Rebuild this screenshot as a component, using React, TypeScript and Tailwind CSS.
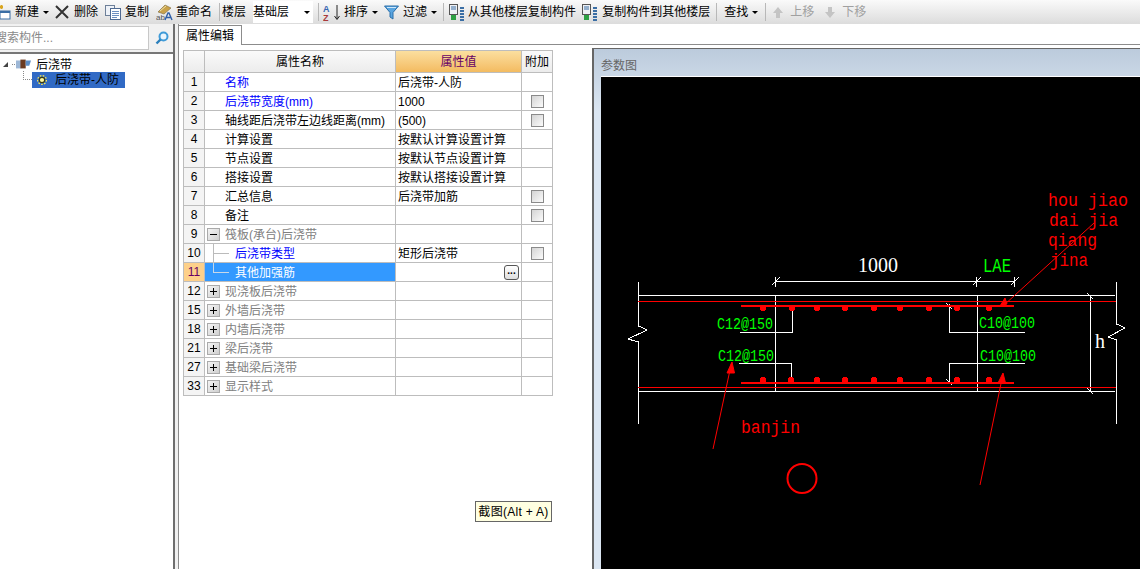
import React from 'react';

const FONT = 'font-["Liberation_Sans","Noto_Sans_CJK_SC",sans-serif]';

const Caret = () => <span className="ml-[4px] w-0 h-0 border-x-[3px] border-x-transparent border-t-[3px] border-t-black" />;
const Sep = ({ ml, mr }: { ml: string; mr: string }) => <span className={`w-px h-[18px] bg-[#b8b8b8] ${ml} ${mr}`} />;

const NewIcon = () => (
  <svg width="11" height="16" viewBox="0 0 11 16" className="shrink-0">
    <rect x="0" y="7" width="10" height="8" fill="#fff" stroke="#3a6ea5" />
    <rect x="0" y="7" width="10" height="2" fill="#3a6ea5" />
    <path d="M0 3h3M1.5 1v4" stroke="#d9a520" strokeWidth="2" />
  </svg>
);
const CopyIcon = () => (
  <svg width="16" height="15" viewBox="0 0 16 15" className="shrink-0">
    <rect x="0.5" y="0.5" width="9" height="10" fill="#eef2f8" stroke="#6d7f98" />
    <rect x="5.5" y="3.5" width="10" height="11" fill="#fff" stroke="#4f6a92" />
    <path d="M7 6.5h7M7 8.5h7M7 10.5h7M7 12.5h5" stroke="#6d8fc0" />
  </svg>
);
const RenameIcon = () => (
  <svg width="17" height="17" viewBox="0 0 17 17" className="shrink-0">
    <path d="M2 8 9 1l6 3-7 6z" fill="#c9a24a" stroke="#7d6a3c" strokeWidth="0.6" />
    <path d="M4 7l6-5" stroke="#efe2a8" />
    <text x="0" y="16" fontSize="8" fill="#555" fontFamily="Liberation Sans">ab</text>
    <path d="M9 16l3-7h1l3 7M10.5 13.5h4" stroke="#2f5fa8" strokeWidth="1.4" fill="none" />
  </svg>
);
const SortIcon = () => (
  <svg width="20" height="17" viewBox="0 0 20 17" className="shrink-0">
    <text x="0" y="8" fontSize="9" fontWeight="700" fill="#3566b0" fontFamily="Liberation Sans">A</text>
    <text x="0" y="17" fontSize="9" fontWeight="700" fill="#a83a3a" fontFamily="Liberation Sans">Z</text>
    <path d="M14 1v14M11.5 12l2.5 3.5 2.5-3.5" stroke="#222" fill="none" />
  </svg>
);
const FilterIcon = () => (
  <svg width="15" height="15" viewBox="0 0 15 15" className="shrink-0">
    <path d="M0.5 1h14L9 7.5V14L6 12V7.5z" fill="#5aa5e0" stroke="#2a6ea8" />
    <path d="M3 2.5h9" stroke="#cfe8fa" />
  </svg>
);
const FloorCopyIcon = () => (
  <svg width="16" height="17" viewBox="0 0 16 17" className="shrink-0">
    <rect x="0.5" y="0.5" width="8" height="10" fill="#eef0f4" stroke="#555" />
    <path d="M2 3h5M2 5h5" stroke="#3a6ea5" />
    <rect x="2" y="11" width="5" height="5" fill="#2ea043" />
    <path d="M11 4h4M11 7h4M11 10h4M11 13h4M11 16h4" stroke="#3a6ea5" strokeWidth="2" />
  </svg>
);
const ArrowIcon = ({ down }: { down?: boolean }) => (
  <svg width="10" height="11" viewBox="0 0 10 11" className="shrink-0">
    <path d={down ? 'M3 0h4v5h3l-5 6-5-6h3z' : 'M3 11h4V6h3L5 0 0 6h3z'} fill="#c4c4c4" />
  </svg>
);

const Toolbar = () => (
  <div className="flex items-center h-6 bg-gradient-to-b from-[#fafafa] to-[#dcdcdc] text-[12px] text-black whitespace-nowrap overflow-hidden">
    <NewIcon />
    <span className="ml-[4px]">新建</span><Caret />
    <svg width="14" height="14" viewBox="0 0 14 14" className="ml-[6px] shrink-0"><path d="M1 1l12 12M13 1 1 13" stroke="#333" strokeWidth="2" /></svg>
    <span className="ml-[5px]">删除</span>
    <span className="ml-[7px]"><CopyIcon /></span>
    <span className="ml-[4px]">复制</span>
    <span className="ml-[7px]"><RenameIcon /></span>
    <span className="ml-[3px]">重命名</span>
    <Sep ml="ml-[7px]" mr="mr-[2px]" />
    <span>楼层</span>
    <div className="ml-[7px] w-[60px] h-[22px] bg-white flex items-center justify-between pr-[3px]">
      <span>基础层</span><Caret />
    </div>
    <Sep ml="ml-[5px]" mr="mr-[4px]" />
    <SortIcon />
    <span className="ml-[1px]">排序</span><Caret />
    <span className="ml-[6px]"><FilterIcon /></span>
    <span className="ml-[4px]">过滤</span><Caret />
    <Sep ml="ml-[6px]" mr="mr-[5px]" />
    <FloorCopyIcon />
    <span className="ml-[3px]">从其他楼层复制构件</span>
    <span className="ml-[6px]"><FloorCopyIcon /></span>
    <span className="ml-[4px]">复制构件到其他楼层</span>
    <Sep ml="ml-[6px]" mr="mr-[7px]" />
    <span>查找</span><Caret />
    <Sep ml="ml-[7px]" mr="mr-[7px]" />
    <ArrowIcon />
    <span className="ml-[7px] text-[#a0a0a0]">上移</span>
    <span className="ml-[11px]"><ArrowIcon down /></span>
    <span className="ml-[7px] text-[#a0a0a0]">下移</span>
  </div>
);

const Sidebar = () => (
  <aside className="w-[175px] shrink-0 flex flex-col border-r-2 border-[#6e6e6e] bg-white text-[12px]">
    <div className="h-[30px] bg-[#f1f1f1] border-b-2 border-[#777] flex items-center">
      <div className="w-[149px] h-[24px] bg-white border border-[#c8c8c8] border-l-0 flex items-center text-[#8a8a8a] overflow-hidden">
        <span className="-ml-[5px] whitespace-nowrap">搜索构件...</span>
      </div>
      <svg width="14" height="14" viewBox="0 0 14 14" className="ml-[6px]">
        <circle cx="8.5" cy="5.5" r="4" fill="#eaf5fd" stroke="#3f9bd8" strokeWidth="2" />
        <path d="M5.5 8.5 1.5 12.5" stroke="#2a7fbc" strokeWidth="2.4" />
      </svg>
    </div>
    <div className="relative pt-[2px]">
      <div className="flex items-center h-[16px]">
        <span className="ml-[3px] w-0 h-0 border-l-[5px] border-l-transparent border-b-[5px] border-b-[#444]" />
        <span className="ml-[4px] w-[3px] border-t border-dotted border-[#888]" />
        <svg width="15" height="12" viewBox="0 0 17 12" className="ml-[1px]">
          <path d="M0 2h6v9H0z" fill="#9db7d6" /><path d="M5 1h6v10H5z" fill="#6b3a20" /><path d="M11 2h6l-2 6h-4z" fill="#5b8cc4" />
        </svg>
        <span className="ml-[5px] translate-y-px">后浇带</span>
      </div>
      <div className="flex items-center h-[16px]">
        <span className="ml-[23px] w-[9px] h-[9px] -mt-[9px] border-l border-b border-dotted border-[#888]" />
        <div className="w-[93px] h-[16px] bg-[#316ac5] flex items-center">
          <svg width="10" height="10" viewBox="0 0 12 12" className="ml-[5px]">
            <circle cx="6" cy="6" r="3.2" fill="#fff8a0" stroke="#3a3a10" strokeWidth="1.4" />
            <circle cx="6" cy="6" r="5.3" fill="none" stroke="#ffe94a" strokeWidth="1.4" strokeDasharray="2 1.6" />
          </svg>
          <span className="ml-[8px] text-black whitespace-nowrap">后浇带-人防</span>
        </div>
      </div>
    </div>
  </aside>
);

const Check = () => (
  <span className="block w-[13px] h-[13px] border border-[#8a8a8a] bg-gradient-to-br from-[#d4d4d4] to-[#fbfbfb]" />
);

const Toggle = ({ open }: { open?: boolean }) => (
  <span className="relative z-10 shrink-0 w-[13px] h-[13px] border border-[#aaa] bg-gradient-to-br from-[#f4f4f4] to-[#cfcfcf] flex items-center justify-center">
    <span className="absolute w-[7px] h-px bg-black" />
    {!open && <span className="absolute w-px h-[7px] bg-black" />}
  </span>
);

type Row = { no: string; name?: string; blue?: boolean; value?: string; check?: boolean; group?: 'open' | 'closed'; child?: boolean; active?: boolean };

const rows: Row[] = [
  { no: '1', name: '名称', blue: true, value: '后浇带-人防' },
  { no: '2', name: '后浇带宽度(mm)', blue: true, value: '1000', check: true },
  { no: '3', name: '轴线距后浇带左边线距离(mm)', value: '(500)', check: true },
  { no: '4', name: '计算设置', value: '按默认计算设置计算' },
  { no: '5', name: '节点设置', value: '按默认节点设置计算' },
  { no: '6', name: '搭接设置', value: '按默认搭接设置计算' },
  { no: '7', name: '汇总信息', value: '后浇带加筋', check: true },
  { no: '8', name: '备注', check: true },
  { no: '9', name: '筏板(承台)后浇带', group: 'open' },
  { no: '10', name: '后浇带类型', blue: true, child: true, value: '矩形后浇带', check: true },
  { no: '11', name: '其他加强筋', child: true, active: true },
  { no: '12', name: '现浇板后浇带', group: 'closed' },
  { no: '15', name: '外墙后浇带', group: 'closed' },
  { no: '18', name: '内墙后浇带', group: 'closed' },
  { no: '21', name: '梁后浇带', group: 'closed' },
  { no: '27', name: '基础梁后浇带', group: 'closed' },
  { no: '33', name: '显示样式', group: 'closed' },
];

const PropertyTable = () => (
  <div className="w-[370px] border-l border-t border-[#bdbdbd] text-[12px] leading-none">
    <div className="flex h-[22px] border-b border-[#bdbdbd]">
      <div className="w-[21px] border-r border-[#bdbdbd] bg-gradient-to-b from-[#fafafa] to-[#ececec]" />
      <div className="w-[191px] border-r border-[#bdbdbd] bg-gradient-to-b from-[#fafafa] to-[#ececec] flex items-center justify-center">属性名称</div>
      <div className="w-[126px] border-r border-[#bdbdbd] bg-gradient-to-b from-[#fbdf9f] to-[#f3bb60] flex items-center justify-center text-[#660066]">属性值</div>
      <div className="w-[31px] border-r border-[#bdbdbd] bg-gradient-to-b from-[#fafafa] to-[#ececec] flex items-center justify-center">附加</div>
    </div>
    {rows.map((r, i) => (
      <div key={r.no} className="flex h-[19px] border-b border-[#bdbdbd]">
        <div className={`w-[21px] border-r border-[#bdbdbd] flex items-center justify-center ${r.active ? 'bg-[#fdd08a] text-[#660066]' : 'bg-[#f4f4f4]'}`}>{r.no}</div>
        <div className={`relative w-[191px] border-r border-[#bdbdbd] flex items-center ${r.active ? 'bg-[#3399ff] text-white' : ''} ${r.blue ? 'text-[#0000ff]' : ''} ${r.group ? 'text-[#808080]' : ''}`}>
          {r.group && <span className="ml-[2px] mr-[5px]"><Toggle open={r.group === 'open'} /></span>}
          {r.child && (
            <>
              <span className={`absolute left-[8px] top-0 w-px ${i === 10 ? 'h-[10px] bg-[#c8d8e8]' : 'h-full bg-[#bbb]'}`} />
              <span className={`absolute left-[8px] top-[9px] w-[16px] h-px ${r.active ? 'bg-[#c8d8e8]' : 'bg-[#bbb]'}`} />
            </>
          )}
          <span className={`whitespace-nowrap translate-y-px ${r.group ? '' : r.child ? 'ml-[30px]' : 'ml-[20px]'}`}>{r.name}</span>
        </div>
        <div className="w-[126px] border-r border-[#bdbdbd] flex items-center justify-between pl-[2px] pr-[2px] whitespace-nowrap">
          <span className="translate-y-px">{r.value}</span>
          {r.active && (
            <span className="w-[15px] h-[15px] rounded-[3px] border border-[#555] bg-gradient-to-b from-white to-[#ddd] flex items-center justify-center text-[10px] font-bold leading-[6px] pb-[3px]">...</span>
          )}
        </div>
        <div className="w-[31px] border-r border-[#bdbdbd] flex items-center justify-center">{r.check && <Check />}</div>
      </div>
    ))}
  </div>
);

const W = '#ffffff';
const R = '#ff0000';
const G = '#00ff00';
const topDots = [762.5, 791.5, 817, 845, 874, 900, 929, 957, 989];
const botDots = [762.5, 790.5, 817, 845, 874, 900, 929, 957, 989];

const Tick = ({ x, y }: { x: number; y: number }) => (
  <path d={`M${x} ${y - 5}V${y + 5}M${x - 4} ${y + 4}L${x + 4} ${y - 4}`} stroke={W} fill="none" />
);

const Dot = ({ x, y }: { x: number; y: number }) => (
  <path d={`M${x - 2} ${y - 3}h4v1h1v4h-1v1h-4v-1h-1v-4h1z`} fill={R} />
);

const mono = { lengthAdjust: 'spacingAndGlyphs' as const };

const Drawing = () => (
  <svg viewBox="601 77 539 492" width="539" height="492" className="block" shapeRendering="crispEdges">
    <g stroke={W} fill="none" strokeWidth="1">
      <path d="M638.5 282V326L647 330 628 339 638.5 342V424" />
      <path d="M1116.5 282V324L1125 328 1108 337 1116.5 340V424" />
      <path d="M638 295.5H1115M638 391.5H1115" />
      <path d="M775.5 295V391M977.5 295V391M1090.5 295V391" />
      <path d="M775 281.5H1014" />
      <path d="M740 332.5H792.5V310M739 363.5H791.5V378" />
      <path d="M949.5 304V332.5H1025M949.5 382V363.5H1025" />
      <path d="M946 303l6 6M946 379l6 6M1087 293l6 6M1087 388l6 6" />
    </g>
    <Tick x={775.5} y={281.5} />
    <Tick x={976.5} y={281.5} />
    <Tick x={1014.5} y={281.5} />
    <g stroke={R} fill="none">
      <path d="M638 301.5H1116M638 387.5H1116" />
      <path d="M741 306H1014M741 382.5H1014" strokeWidth="2" />
    </g>
    {topDots.map(x => <Dot key={x} x={x} y={308} />)}
    {botDots.map(x => <Dot key={x} x={x} y={380} />)}
    <g shapeRendering="auto" stroke={R} fill={R}>
      <path d="M1003 306 1094 223" fill="none" />
      <path d="M1005 298 1000 306 1007 304z" />
      <path d="M713 449 731.5 363" fill="none" />
      <path d="M732 362 727 373 734.5 373z" />
      <path d="M980 485 1003 374" fill="none" />
      <path d="M1003 373 998 383 1005.5 383z" />
      <circle cx="802" cy="478.5" r="14.5" fill="none" strokeWidth="2" />
    </g>
    <g fontFamily="Liberation Mono, monospace" shapeRendering="auto">
      <text x="858" y="272" fontSize="20" fontFamily="Liberation Serif, serif" fill={W}>1000</text>
      <text x="983" y="272" fontSize="20" textLength={28} {...mono} fill={G}>LAE</text>
      <text x="1095" y="348" fontSize="20" fontFamily="Liberation Serif, serif" fill={W}>h</text>
      <g fontSize="16" fill={G}>
        <text x="717" y="329" textLength={56} {...mono}>C12@150</text>
        <text x="718" y="361" textLength={56} {...mono}>C12@150</text>
        <text x="979" y="328" textLength={56} {...mono}>C10@100</text>
        <text x="980" y="361" textLength={56} {...mono}>C10@100</text>
      </g>
      <g fontSize="18" fill={R}>
        <text x="1048" y="206" textLength={80} {...mono}>hou jiao</text>
        <text x="1049" y="226" textLength={69} {...mono}>dai jia</text>
        <text x="1048" y="246" textLength={49} {...mono}>qiang</text>
        <text x="1050" y="266" textLength={38} {...mono}>jina</text>
        <text x="741" y="433" textLength={59} {...mono}>banjin</text>
      </g>
    </g>
  </svg>
);

const App: React.FC = () => (
  <div className={`relative w-[1140px] h-[569px] overflow-hidden bg-white flex flex-col ${FONT}`}>
    <Toolbar />
    <div className="flex flex-1 min-h-0">
      <Sidebar />
      <div className="w-[3px] bg-[#f0f0f0]" />
      <main className="flex-1 min-w-0 flex flex-col border-l border-[#8c8c8c]">
        <div className="h-[21px] border-b border-[#8c8c8c] flex items-end shrink-0">
          <div className="w-[63px] h-[20px] bg-white border-r border-t border-[#8c8c8c] text-[12px] flex items-center justify-center relative top-px">属性编辑</div>
        </div>
        <div className="flex flex-1 min-h-0">
          <div className="w-[413px] shrink-0 pl-[4px] pt-[5px]">
            <PropertyTable />
          </div>
          <section className="flex-1 mt-[3px] border-l-2 border-t border-[#666] bg-gradient-to-b from-[#bccbdc] to-[#dbe6f2] to-[12%] pl-[7px] flex flex-col">
            <div className="h-[27px] pt-[10px] text-[12px] leading-[14px] text-[#666]">参数图</div>
            <div className="flex-1 bg-black border-t border-white overflow-hidden">
              <Drawing />
            </div>
          </section>
        </div>
      </main>
    </div>
    <div className="absolute left-[475px] top-[501px] w-[77px] h-[21px] bg-[#ffffe1] border border-[#666] text-[12px] tracking-[0.3px] flex items-center justify-center whitespace-nowrap">截图(Alt + A)</div>
  </div>
);

export default App;
